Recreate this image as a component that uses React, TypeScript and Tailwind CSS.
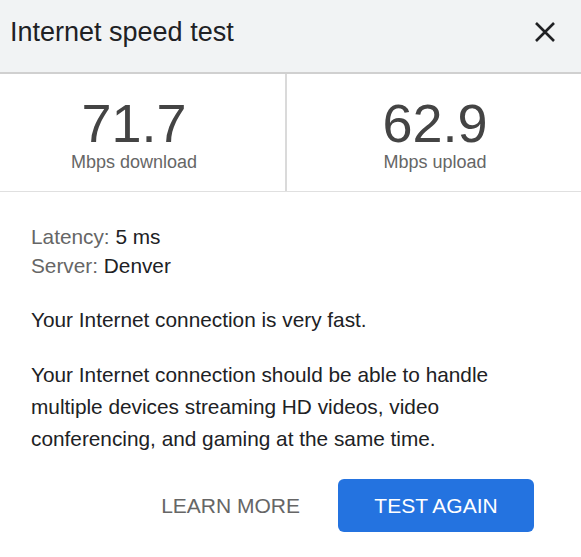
import React from 'react';

const App = () => {
  return (
    <div className="w-[581px] h-[557px] bg-white font-['Liberation_Sans',Arial,sans-serif] overflow-hidden">
      {/* Header */}
      <div className="h-[74px] bg-[#f1f3f4] border-b-2 border-[#d0d0d0] flex items-start justify-between pl-[10px] pr-[24px] pt-[14px]">
        <h1 className="text-[27px] leading-[36px] text-[#202124]">Internet speed test</h1>
        <button className="mt-[6px] w-[24px] h-[24px] flex items-center justify-center text-[#202124]">
          <svg width="22" height="22" viewBox="0 0 22 22">
            <path d="M2 2 L20 20 M20 2 L2 20" stroke="currentColor" strokeWidth="2.6" fill="none" />
          </svg>
        </button>
      </div>

      {/* Results */}
      <div className="grid grid-cols-[287px_1fr] h-[118px] border-b border-[#e0e0e0]">
        <div className="flex flex-col items-center pt-[24px] pr-[17px] border-r-2 border-[#dadada]">
          <div className="text-[54px] leading-[50px] text-[#444]">71.7</div>
          <div className="mt-[4px] text-[18px] leading-[20px] text-[#666]">Mbps download</div>
        </div>
        <div className="flex flex-col items-center pt-[24px] pl-[2px]">
          <div className="text-[54px] leading-[50px] text-[#444]">62.9</div>
          <div className="mt-[4px] text-[18px] leading-[20px] text-[#666]">Mbps upload</div>
        </div>
      </div>

      {/* Details */}
      <div className="px-[31px] pt-[30px] text-[20.8px] text-[#202124]">
        <div className="leading-[29px]">
          <div><span className="text-[#666]">Latency:</span> 5 ms</div>
          <div><span className="text-[#666]">Server:</span> Denver</div>
        </div>
        <p className="mt-[24px] leading-[32px]">Your Internet connection is very fast.</p>
        <p className="mt-[23px] leading-[32px]">
          Your Internet connection should be able to handle multiple devices streaming HD videos, video conferencing, and gaming at the same time.
        </p>
        <div className="mt-[24px] flex items-center justify-end gap-[38px] pr-[16px]">
          <button className="text-[21px] text-[#666] uppercase">Learn more</button>
          <button className="w-[196px] h-[53px] rounded-[6px] bg-[#2473e0] text-white text-[21px] uppercase">Test again</button>
        </div>
      </div>
    </div>
  );
};

export default App;
